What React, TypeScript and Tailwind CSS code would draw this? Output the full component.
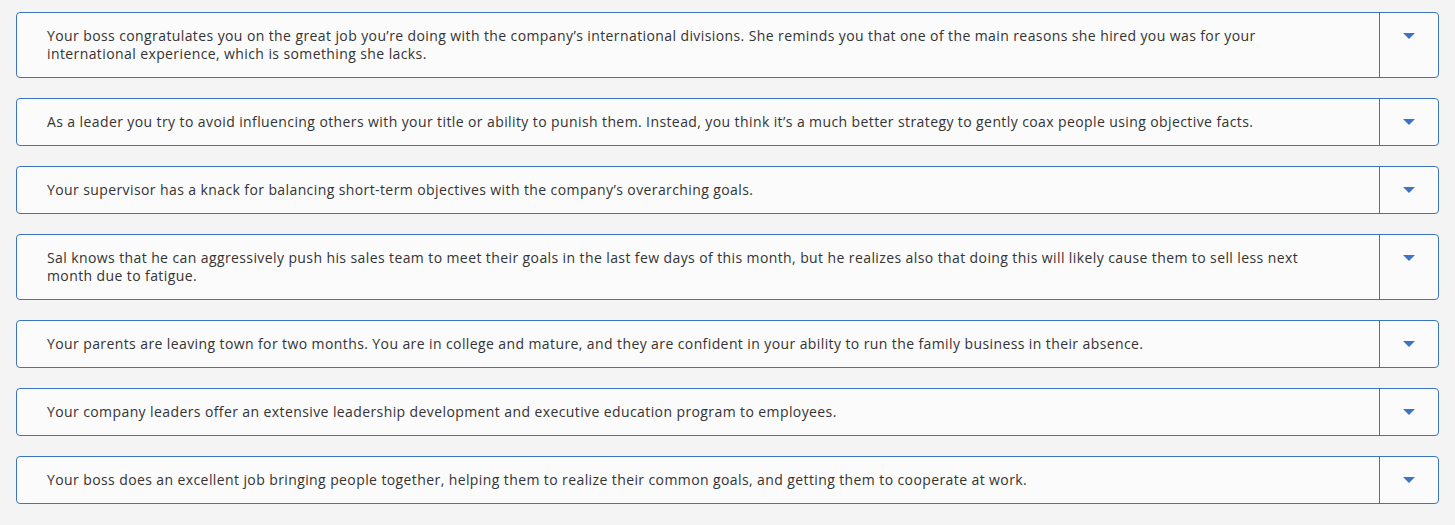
const items = [
  "Your boss congratulates you on the great job you’re doing with the company’s international divisions. She reminds you that one of the main reasons she hired you was for your international experience, which is something she lacks.",
  "As a leader you try to avoid influencing others with your title or ability to punish them. Instead, you think it’s a much better strategy to gently coax people using objective facts.",
  "Your supervisor has a knack for balancing short-term objectives with the company’s overarching goals.",
  "Sal knows that he can aggressively push his sales team to meet their goals in the last few days of this month, but he realizes also that doing this will likely cause them to sell less next month due to fatigue.",
  "Your parents are leaving town for two months. You are in college and mature, and they are confident in your ability to run the family business in their absence.",
  "Your company leaders offer an extensive leadership development and executive education program to employees.",
  "Your boss does an excellent job bringing people together, helping them to realize their common goals, and getting them to cooperate at work.",
]

const Caret = () => (
  <svg width="12" height="6" viewBox="0 0 12 6" className="block">
    <path d="M0 0 H12 L6 6 Z" fill="#3a74c2" />
  </svg>
)

export default function App() {
  return (
    <div
      className="min-h-[525px] bg-[#f4f4f4] pt-3 pl-4 pr-4 flex flex-col gap-5"
      style={{ fontFamily: '"Open Sans", "Liberation Sans", sans-serif' }}
    >
      {items.map((t, i) => (
        <div
          key={i}
          className="flex border border-[#3a74c2] rounded-[4px] bg-[#fbfbfb]"
        >
          <div className="flex-1 pl-[30px] pr-[40px] py-[14px] text-[14px] leading-[18px] tracking-[0.4px] text-[#333]">
            {t}
          </div>
          <div className="w-[59px] border-l border-[#3a74c2] flex justify-center pt-[20px]">
            <Caret />
          </div>
        </div>
      ))}
    </div>
  )
}
